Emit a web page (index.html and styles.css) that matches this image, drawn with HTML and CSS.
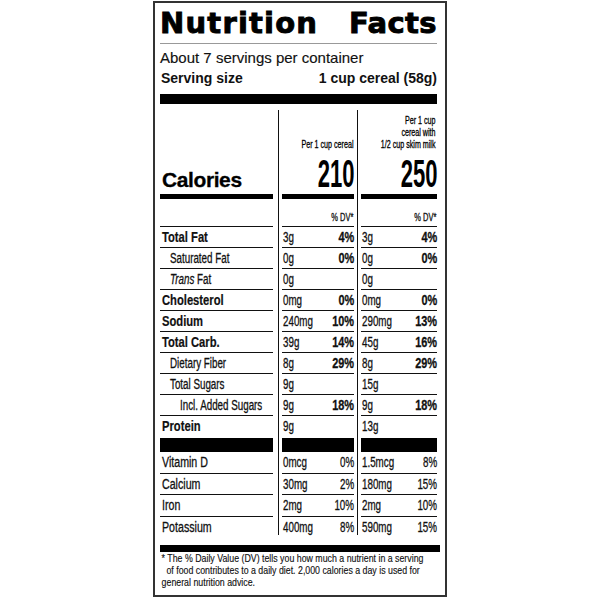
FILE: index.html
```html
<!DOCTYPE html>
<html>
<head>
<meta charset="utf-8">
<title>Nutrition Facts</title>
<link rel="stylesheet" href="styles.css">
</head>
<body>
<div class="label">
  <div class="title"><span class="w1">Nutrition</span><span>Facts</span></div>
  <div class="servings">About 7 servings per container</div>
  <div class="serving-size"><span>Serving size</span><span>1 cup cereal (58g)</span></div>
  <div class="bar-thick"></div>

  <div class="table">
    <div class="vline v1"></div>
    <div class="vline v2"></div>

    <div class="row head">
      <div class="c1"></div>
      <div class="c2"><div class="hd">Per 1 cup cereal</div></div>
      <div class="c3"><div class="hd">Per 1 cup<br>cereal with<br>1/2 cup skim milk</div></div>
    </div>

    <div class="row cal">
      <div class="c1"><span class="cal-label">Calories</span></div>
      <div class="c2"><span class="cal-num">210</span></div>
      <div class="c3"><span class="cal-num">250</span></div>
    </div>

    <div class="row dv">
      <div class="c1"></div>
      <div class="c2"><span>% DV*</span></div>
      <div class="c3"><span>% DV*</span></div>
    </div>

    <div class="row n">
      <div class="c1 b"><span class="t">Total Fat</span></div>
      <div class="c2"><span>3g</span><span class="pct">4%</span></div>
      <div class="c3"><span>3g</span><span class="pct">4%</span></div>
    </div>
    <div class="row n">
      <div class="c1 ind1"><span class="t">Saturated Fat</span></div>
      <div class="c2"><span>0g</span><span class="pct">0%</span></div>
      <div class="c3"><span>0g</span><span class="pct">0%</span></div>
    </div>
    <div class="row n">
      <div class="c1 ind1"><span class="t"><i>Trans</i> Fat</span></div>
      <div class="c2"><span>0g</span></div>
      <div class="c3"><span>0g</span></div>
    </div>
    <div class="row n">
      <div class="c1 b"><span class="t">Cholesterol</span></div>
      <div class="c2"><span>0mg</span><span class="pct">0%</span></div>
      <div class="c3"><span>0mg</span><span class="pct">0%</span></div>
    </div>
    <div class="row n">
      <div class="c1 b"><span class="t">Sodium</span></div>
      <div class="c2"><span>240mg</span><span class="pct">10%</span></div>
      <div class="c3"><span>290mg</span><span class="pct">13%</span></div>
    </div>
    <div class="row n">
      <div class="c1 b"><span class="t">Total Carb.</span></div>
      <div class="c2"><span>39g</span><span class="pct">14%</span></div>
      <div class="c3"><span>45g</span><span class="pct">16%</span></div>
    </div>
    <div class="row n">
      <div class="c1 ind1"><span class="t">Dietary Fiber</span></div>
      <div class="c2"><span>8g</span><span class="pct">29%</span></div>
      <div class="c3"><span>8g</span><span class="pct">29%</span></div>
    </div>
    <div class="row n">
      <div class="c1 ind1"><span class="t">Total Sugars</span></div>
      <div class="c2"><span>9g</span></div>
      <div class="c3"><span>15g</span></div>
    </div>
    <div class="row n">
      <div class="c1 ind2"><span class="t">Incl. Added Sugars</span></div>
      <div class="c2"><span>9g</span><span class="pct">18%</span></div>
      <div class="c3"><span>9g</span><span class="pct">18%</span></div>
    </div>
    <div class="row n last">
      <div class="c1 b"><span class="t">Protein</span></div>
      <div class="c2"><span>9g</span></div>
      <div class="c3"><span>13g</span></div>
    </div>

    <div class="row blackrow">
      <div class="c1"></div>
      <div class="c2"></div>
      <div class="c3"></div>
    </div>

    <div class="row n vit">
      <div class="c1"><span class="t">Vitamin D</span></div>
      <div class="c2"><span>0mcg</span><span>0%</span></div>
      <div class="c3"><span>1.5mcg</span><span>8%</span></div>
    </div>
    <div class="row n vit">
      <div class="c1"><span class="t">Calcium</span></div>
      <div class="c2"><span>30mg</span><span>2%</span></div>
      <div class="c3"><span>180mg</span><span>15%</span></div>
    </div>
    <div class="row n vit">
      <div class="c1"><span class="t">Iron</span></div>
      <div class="c2"><span>2mg</span><span>10%</span></div>
      <div class="c3"><span>2mg</span><span>10%</span></div>
    </div>
    <div class="row n vit last">
      <div class="c1"><span class="t">Potassium</span></div>
      <div class="c2"><span>400mg</span><span>8%</span></div>
      <div class="c3"><span>590mg</span><span>15%</span></div>
    </div>
  </div>

  <div class="bar-foot"></div>
  <div class="foot">
    <div>* The % Daily Value (DV) tells you how much a nutrient in a serving</div>
    <div class="in">of food contributes to a daily diet. 2,000 calories a day is used for</div>
    <div>general nutrition advice.</div>
  </div>
</div>
</body>
</html>
```

FILE: styles.css
```css
* {
  box-sizing: border-box;
}

body {
  margin: 0;
  background: #fff;
  color: #111;
  font-family: "Liberation Sans", Arial, sans-serif;
}

.label {
  margin: 1px 0 0 153px;
  width: 294px;
  height: 596px;
  border: 2px solid #333;
  padding: 3px 8px 0 5px;
}

.title {
  display: flex;
  justify-content: space-between;
  font-family: "DejaVu Sans", sans-serif;
  font-weight: bold;
  font-size: 29px;
  line-height: 34px;
  height: 38px;
  color: #000;
  letter-spacing: 0.4px;
  -webkit-text-stroke: 0.9px #000;
  border-bottom: 1px solid #999;
}

.title .w1 {
  letter-spacing: 1.2px;
}

.servings {
  font-size: 15px;
  line-height: 18px;
  margin-top: 5px;
  -webkit-text-stroke: 0.15px #111;
}

.serving-size {
  display: flex;
  justify-content: space-between;
  font-weight: bold;
  font-size: 14px;
  line-height: 18px;
  margin-top: 2px;
  padding-left: 1px;
}

.bar-thick {
  height: 10px;
  background: #000;
  margin-top: 7px;
}

.table {
  display: grid;
  margin-top: 6px;
  grid-template-columns: 113px 9px 72px 7px 76px;
  grid-template-rows: 40px 49px 28px repeat(9, 21px) 22px 14px 22px 21px 22px 18px;
}

.vline {
  grid-row: 1 / -1;
  width: 1px;
  background: #111;
}

.v1 {
  grid-column: 2;
  margin-left: 5px;
}

.v2 {
  grid-column: 4;
  margin-left: 3px;
}

.row {
  display: contents;
}

.c1 {
  grid-column: 1;
}

.c2 {
  grid-column: 3;
}

.c3 {
  grid-column: 5;
}

/* column headings */
.head .c2,
.head .c3 {
  display: flex;
  flex-direction: column;
  justify-content: flex-end;
  align-items: flex-end;
  padding-right: 1px;
}

.hd {
  text-align: right;
  font-size: 10.5px;
  line-height: 12px;
  white-space: nowrap;
  color: #000;
  -webkit-text-stroke: 0.3px #000;
  transform: scaleX(0.68);
  transform-origin: right center;
}

/* calories */
.cal > div {
  display: flex;
  align-items: flex-end;
  border-bottom: 5px solid #000;
}

.cal .c2,
.cal .c3 {
  justify-content: flex-end;
}

.cal-label {
  font-weight: bold;
  font-size: 21px;
  line-height: 24px;
  padding: 0 0 2px 2px;
  letter-spacing: -0.4px;
  color: #000;
  -webkit-text-stroke: 0.3px #000;
}

.cal-num {
  font-weight: bold;
  font-size: 38px;
  line-height: 40px;
  color: #000;
  transform: scaleX(0.58);
  transform-origin: right center;
}

/* % DV row */
.dv > div {
  border-bottom: 1px solid #111;
}

.dv .c2,
.dv .c3 {
  display: flex;
  align-items: flex-end;
  justify-content: flex-end;
  font-size: 10px;
  line-height: 12px;
  padding: 0 1px 2px 0;
  -webkit-text-stroke: 0.3px #111;
}

.dv span {
  display: inline-block;
  transform: scaleX(0.75);
  transform-origin: right center;
}

/* nutrient rows */
.n > div {
  border-bottom: 1px solid #111;
  font-size: 14px;
  line-height: 20px;
  white-space: nowrap;
  -webkit-text-stroke: 0.3px #111;
}

.n.last > div {
  border-bottom: none;
}

.n .c1 {
  padding-left: 2px;
}

.t {
  display: inline-block;
  transform: scaleX(0.7);
  transform-origin: left center;
}

.vit .c1 .t {
  transform: scaleX(0.76);
}

.n .c1.b {
  font-weight: bold;
  -webkit-text-stroke: 0.2px #111;
}

.n .c1.b .t {
  transform: scaleX(0.8);
}

.n .c1.ind1 {
  padding-left: 10px;
}

.n .c1.ind2 {
  padding-left: 20px;
}

.n .c2,
.n .c3 {
  display: flex;
  justify-content: space-between;
  padding-left: 1px;
}

.n .c2 span,
.n .c3 span {
  display: inline-block;
  transform: scaleX(0.7);
  transform-origin: left center;
}

.n .c2 span + span,
.n .c3 span + span {
  transform-origin: right center;
}

.n .c2 .pct,
.n .c3 .pct {
  font-weight: bold;
  transform: scaleX(0.78);
}

.blackrow > div {
  background: #000;
}

/* footer */
.bar-foot {
  height: 7px;
  background: #000;
  margin: 10px -3px 0 0;
}

.foot {
  font-size: 11px;
  line-height: 12px;
  padding: 0 0 0 2px;
  white-space: nowrap;
  transform: scaleX(0.8);
  transform-origin: left top;
  -webkit-text-stroke: 0.15px #111;
}

.foot .in {
  padding-left: 6px;
}
```
